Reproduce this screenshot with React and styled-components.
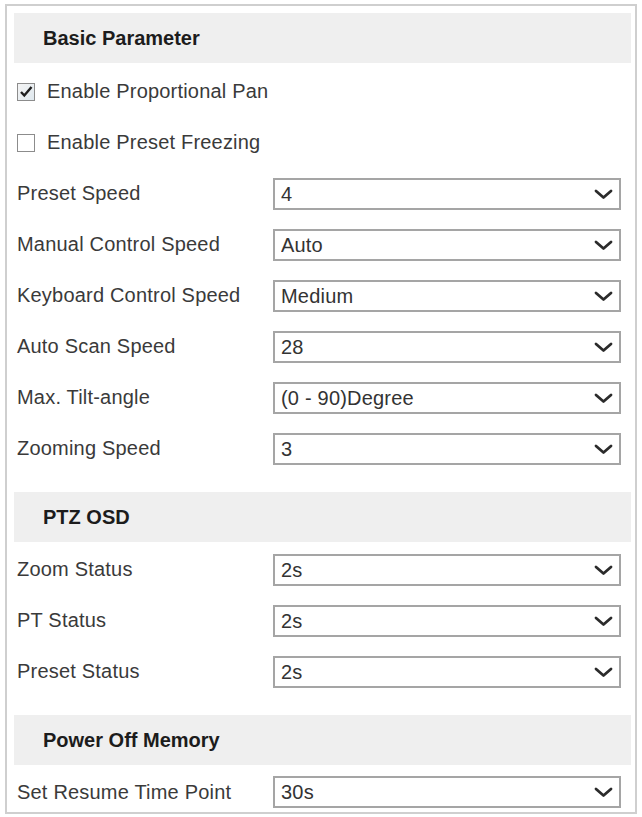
import React from "react";
import styled, { createGlobalStyle } from "styled-components";

const GlobalStyle = createGlobalStyle`
  html, body {
    margin: 0;
    padding: 0;
    background: #ffffff;
  }
  body {
    font-family: "Liberation Sans", Arial, sans-serif;
  }
`;

const Panel = styled.div`
  box-sizing: border-box;
  width: 632px;
  margin: 4px 0 0 5px;
  padding: 7px 4px 0 7px;
  border: 2px solid #cfcfcf;
  background: #ffffff;
`;

const SectionTitle = styled.div`
  height: 50px;
  display: flex;
  align-items: center;
  padding-left: 29px;
  margin-top: ${(p) => p.$mt || 0}px;
  margin-bottom: ${(p) => p.$mb || 2}px;
  background: #efefef;
  font-size: 20px;
  font-weight: bold;
  color: #1c1c1c;
`;

const Row = styled.div`
  box-sizing: border-box;
  height: ${(p) => p.$h || 51}px;
  display: flex;
  align-items: center;
  padding: ${(p) => p.$pt || 0}px 0 ${(p) => p.$pb || 0}px 3px;
`;

const Label = styled.div`
  width: 256px;
  flex: none;
  font-size: 20px;
  letter-spacing: 0.2px;
  color: #3a3a3a;
  white-space: nowrap;
`;

const CheckLabel = styled.label`
  display: flex;
  align-items: center;
  gap: 12px;
  font-size: 20px;
  letter-spacing: 0.2px;
  color: #3a3a3a;
  white-space: nowrap;
`;

const Box = styled.span`
  box-sizing: border-box;
  width: 18px;
  height: 18px;
  flex: none;
  display: flex;
  align-items: center;
  justify-content: center;
  border: 1.5px solid #8c8c8c;
  background: ${(p) =>
    p.$on ? "linear-gradient(135deg, #f4f4f4, #dfe8ee)" : "#ffffff"};
`;

const SelectWrap = styled.div`
  position: relative;
  width: 348px;
  height: 32px;
  flex: none;
`;

const Select = styled.select`
  box-sizing: border-box;
  width: 100%;
  height: 100%;
  appearance: none;
  -webkit-appearance: none;
  border: 2px solid #a5a5a5;
  border-radius: 0;
  background: #ffffff;
  padding: 0 34px 0 6px;
  font-family: "Liberation Sans", Arial, sans-serif;
  font-size: 20px;
  letter-spacing: 0.2px;
  color: #333333;
  outline: none;
`;

const Chevron = styled.svg`
  position: absolute;
  right: 8px;
  top: 11px;
  pointer-events: none;
`;

const Checkbox = ({ on, children }) => (
  <CheckLabel>
    <Box $on={on}>
      {on && (
        <svg width="14" height="13" viewBox="0 0 14 13">
          <path
            d="M2 7 L5.3 10.5 L12.5 2"
            fill="none"
            stroke="#1e1e1e"
            strokeWidth="2.4"
          />
        </svg>
      )}
    </Box>
    {children}
  </CheckLabel>
);

const Field = ({ label, value, ...rest }) => (
  <Row {...rest}>
    <Label>{label}</Label>
    <SelectWrap>
      <Select defaultValue={value}>
        <option value={value}>{value}</option>
      </Select>
      <Chevron width="19" height="11" viewBox="0 0 19 11">
        <path
          d="M2 2 L9.5 8.5 L17 2"
          fill="none"
          stroke="#2b2b2b"
          strokeWidth="2.8"
          strokeLinecap="round"
          strokeLinejoin="round"
        />
      </Chevron>
    </SelectWrap>
  </Row>
);

const basic = [
  ["Preset Speed", "4"],
  ["Manual Control Speed", "Auto"],
  ["Keyboard Control Speed", "Medium"],
  ["Auto Scan Speed", "28"],
  ["Max. Tilt-angle", "(0 - 90)Degree"],
  ["Zooming Speed", "3"],
];

const osd = [
  ["Zoom Status", "2s"],
  ["PT Status", "2s"],
  ["Preset Status", "2s"],
];

export default function App() {
  return (
    <>
      <GlobalStyle />
      <Panel>
        <SectionTitle $mb={3}>Basic Parameter</SectionTitle>
        <Row>
          <Checkbox on>Enable Proportional Pan</Checkbox>
        </Row>
        <Row>
          <Checkbox>Enable Preset Freezing</Checkbox>
        </Row>
        {basic.map(([l, v]) => (
          <Field key={l} label={l} value={v} />
        ))}
        <SectionTitle $mt={18}>PTZ OSD</SectionTitle>
        {osd.map(([l, v]) => (
          <Field key={l} label={l} value={v} />
        ))}
        <SectionTitle $mt={18}>Power Off Memory</SectionTitle>
        <Field
          label="Set Resume Time Point"
          value="30s"
          $pt={9}
          $pb={4}
          $h={45}
        />
      </Panel>
    </>
  );
}
